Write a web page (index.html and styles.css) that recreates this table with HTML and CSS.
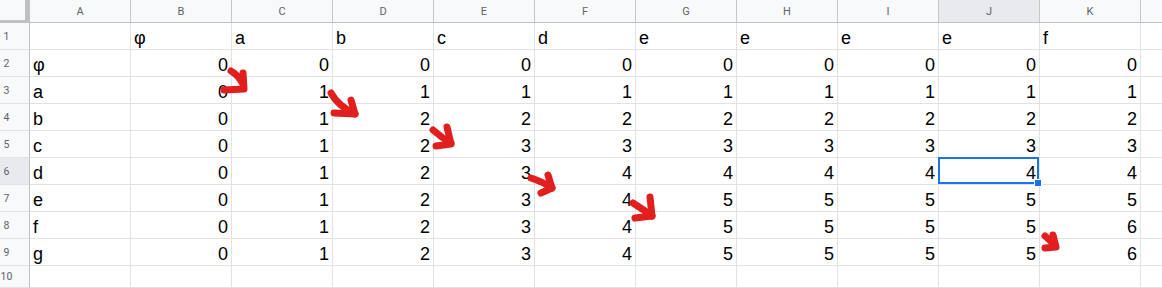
FILE: index.html
```html
<!DOCTYPE html>
<html>
<head>
<meta charset="utf-8">
<link rel="stylesheet" href="styles.css">
</head>
<body>
<div class="sheet">
  <div class="grid">
    <div class="corner"></div>
    <div class="ch">A</div><div class="ch">B</div><div class="ch">C</div><div class="ch">D</div><div class="ch">E</div><div class="ch">F</div><div class="ch">G</div><div class="ch">H</div><div class="ch">I</div><div class="ch active">J</div><div class="ch">K</div><div class="ch"></div>

    <div class="rh"><span>1</span></div>
    <div class="c"></div><div class="c">φ</div><div class="c">a</div><div class="c">b</div><div class="c">c</div><div class="c">d</div><div class="c">e</div><div class="c">e</div><div class="c">e</div><div class="c">e</div><div class="c">f</div><div class="c"></div>

    <div class="rh"><span>2</span></div>
    <div class="c">φ</div><div class="n">0</div><div class="n">0</div><div class="n">0</div><div class="n">0</div><div class="n">0</div><div class="n">0</div><div class="n">0</div><div class="n">0</div><div class="n">0</div><div class="n">0</div><div class="c"></div>

    <div class="rh"><span>3</span></div>
    <div class="c">a</div><div class="n">0</div><div class="n">1</div><div class="n">1</div><div class="n">1</div><div class="n">1</div><div class="n">1</div><div class="n">1</div><div class="n">1</div><div class="n">1</div><div class="n">1</div><div class="c"></div>

    <div class="rh"><span>4</span></div>
    <div class="c">b</div><div class="n">0</div><div class="n">1</div><div class="n">2</div><div class="n">2</div><div class="n">2</div><div class="n">2</div><div class="n">2</div><div class="n">2</div><div class="n">2</div><div class="n">2</div><div class="c"></div>

    <div class="rh"><span>5</span></div>
    <div class="c">c</div><div class="n">0</div><div class="n">1</div><div class="n">2</div><div class="n">3</div><div class="n">3</div><div class="n">3</div><div class="n">3</div><div class="n">3</div><div class="n">3</div><div class="n">3</div><div class="c"></div>

    <div class="rh active"><span>6</span></div>
    <div class="c">d</div><div class="n">0</div><div class="n">1</div><div class="n">2</div><div class="n">3</div><div class="n">4</div><div class="n">4</div><div class="n">4</div><div class="n">4</div><div class="n">4</div><div class="n">4</div><div class="c"></div>

    <div class="rh"><span>7</span></div>
    <div class="c">e</div><div class="n">0</div><div class="n">1</div><div class="n">2</div><div class="n">3</div><div class="n">4</div><div class="n">5</div><div class="n">5</div><div class="n">5</div><div class="n">5</div><div class="n">5</div><div class="c"></div>

    <div class="rh"><span>8</span></div>
    <div class="c">f</div><div class="n">0</div><div class="n">1</div><div class="n">2</div><div class="n">3</div><div class="n">4</div><div class="n">5</div><div class="n">5</div><div class="n">5</div><div class="n">5</div><div class="n">6</div><div class="c"></div>

    <div class="rh"><span>9</span></div>
    <div class="c">g</div><div class="n">0</div><div class="n">1</div><div class="n">2</div><div class="n">3</div><div class="n">4</div><div class="n">5</div><div class="n">5</div><div class="n">5</div><div class="n">5</div><div class="n">6</div><div class="c"></div>

    <div class="rh"><span>10</span></div>
    <div class="c"></div><div class="c"></div><div class="c"></div><div class="c"></div><div class="c"></div><div class="c"></div><div class="c"></div><div class="c"></div><div class="c"></div><div class="c"></div><div class="c"></div><div class="c"></div>
  </div>

  <div class="selection"><div class="handle"></div></div>

  <svg class="ink" width="1162" height="288" viewBox="0 0 1162 288">
    <g fill="none" stroke="#e11f1f" stroke-width="7" stroke-linecap="round" stroke-linejoin="round">
      <path d="M231 71 Q238 75 243 84"/>
      <path d="M243 73 L244 89 L224 90"/>
      <path d="M331 93 Q338 106 355 114"/>
      <path d="M351 100 L355 114 L334 113"/>
      <path d="M433 130 Q442 138 451 143"/>
      <path d="M447 127 L451 144 L436 146"/>
      <path d="M531 178 Q543 182 552 188"/>
      <path d="M548 175 L552 188 L541 193"/>
      <path d="M633 203 Q644 210 652 216"/>
      <path d="M650 197 L652 216 L635 218"/>
      <path d="M1045 236 L1055 245"/>
      <path d="M1053 235 L1056 247 L1045 248"/>
    </g>
  </svg>
</div>
</body>
</html>
```

FILE: styles.css
```css
html, body {
  margin: 0;
  padding: 0;
  background: #ffffff;
}

.sheet {
  position: relative;
  width: 1162px;
  height: 288px;
  overflow: hidden;
}

.grid {
  display: grid;
  grid-template-columns: 30px repeat(12, 101px);
  grid-template-rows: 23px repeat(9, 27px) 22px;
  width: max-content;
}

.grid > div {
  box-sizing: border-box;
  border-right: 1px solid #e2e2e3;
  border-bottom: 1px solid #e2e2e3;
}

.grid > .corner {
  background: #f8f9fa;
  border-right: 1px solid #c0c0c0;
  border-bottom: 1px solid #c0c0c0;
  box-shadow: inset -4px -2px 0 #c0c0c0;
}

.grid > .ch {
  background: #f8f9fa;
  border-right: 1px solid #c7c7c7;
  border-bottom: 1px solid #c0c0c0;
  display: flex;
  align-items: center;
  justify-content: center;
  font-family: Roboto, "Liberation Sans", Arial, sans-serif;
  font-size: 11px;
  color: #5f6368;
}

.grid > .ch.active,
.grid > .rh.active {
  background: #e8eaed;
}

.grid > .rh {
  background: #f8f9fa;
  border-right: 1px solid #c0c0c0;
  display: flex;
  align-items: center;
  font-family: Roboto, "Liberation Sans", Arial, sans-serif;
  font-size: 10.5px;
  color: #5f6368;
}

.rh span {
  display: block;
  width: 13px;
  text-align: center;
}

.grid > .c,
.grid > .n {
  display: flex;
  align-items: flex-end;
  padding: 0 3px 1px 3px;
  font-family: "Liberation Sans", Arial, sans-serif;
  font-size: 18px;
  line-height: 20px;
  color: #000000;
  white-space: nowrap;
}

.grid > .n {
  justify-content: flex-end;
}

.selection {
  position: absolute;
  left: 938px;
  top: 157px;
  width: 101px;
  height: 27px;
  box-sizing: border-box;
  border: 2px solid #1a73e8;
}

.handle {
  position: absolute;
  right: -5px;
  bottom: -5px;
  width: 6px;
  height: 6px;
  background: #1a73e8;
  border: 1px solid #ffffff;
}

.ink {
  position: absolute;
  left: 0;
  top: 0;
  pointer-events: none;
}
```
